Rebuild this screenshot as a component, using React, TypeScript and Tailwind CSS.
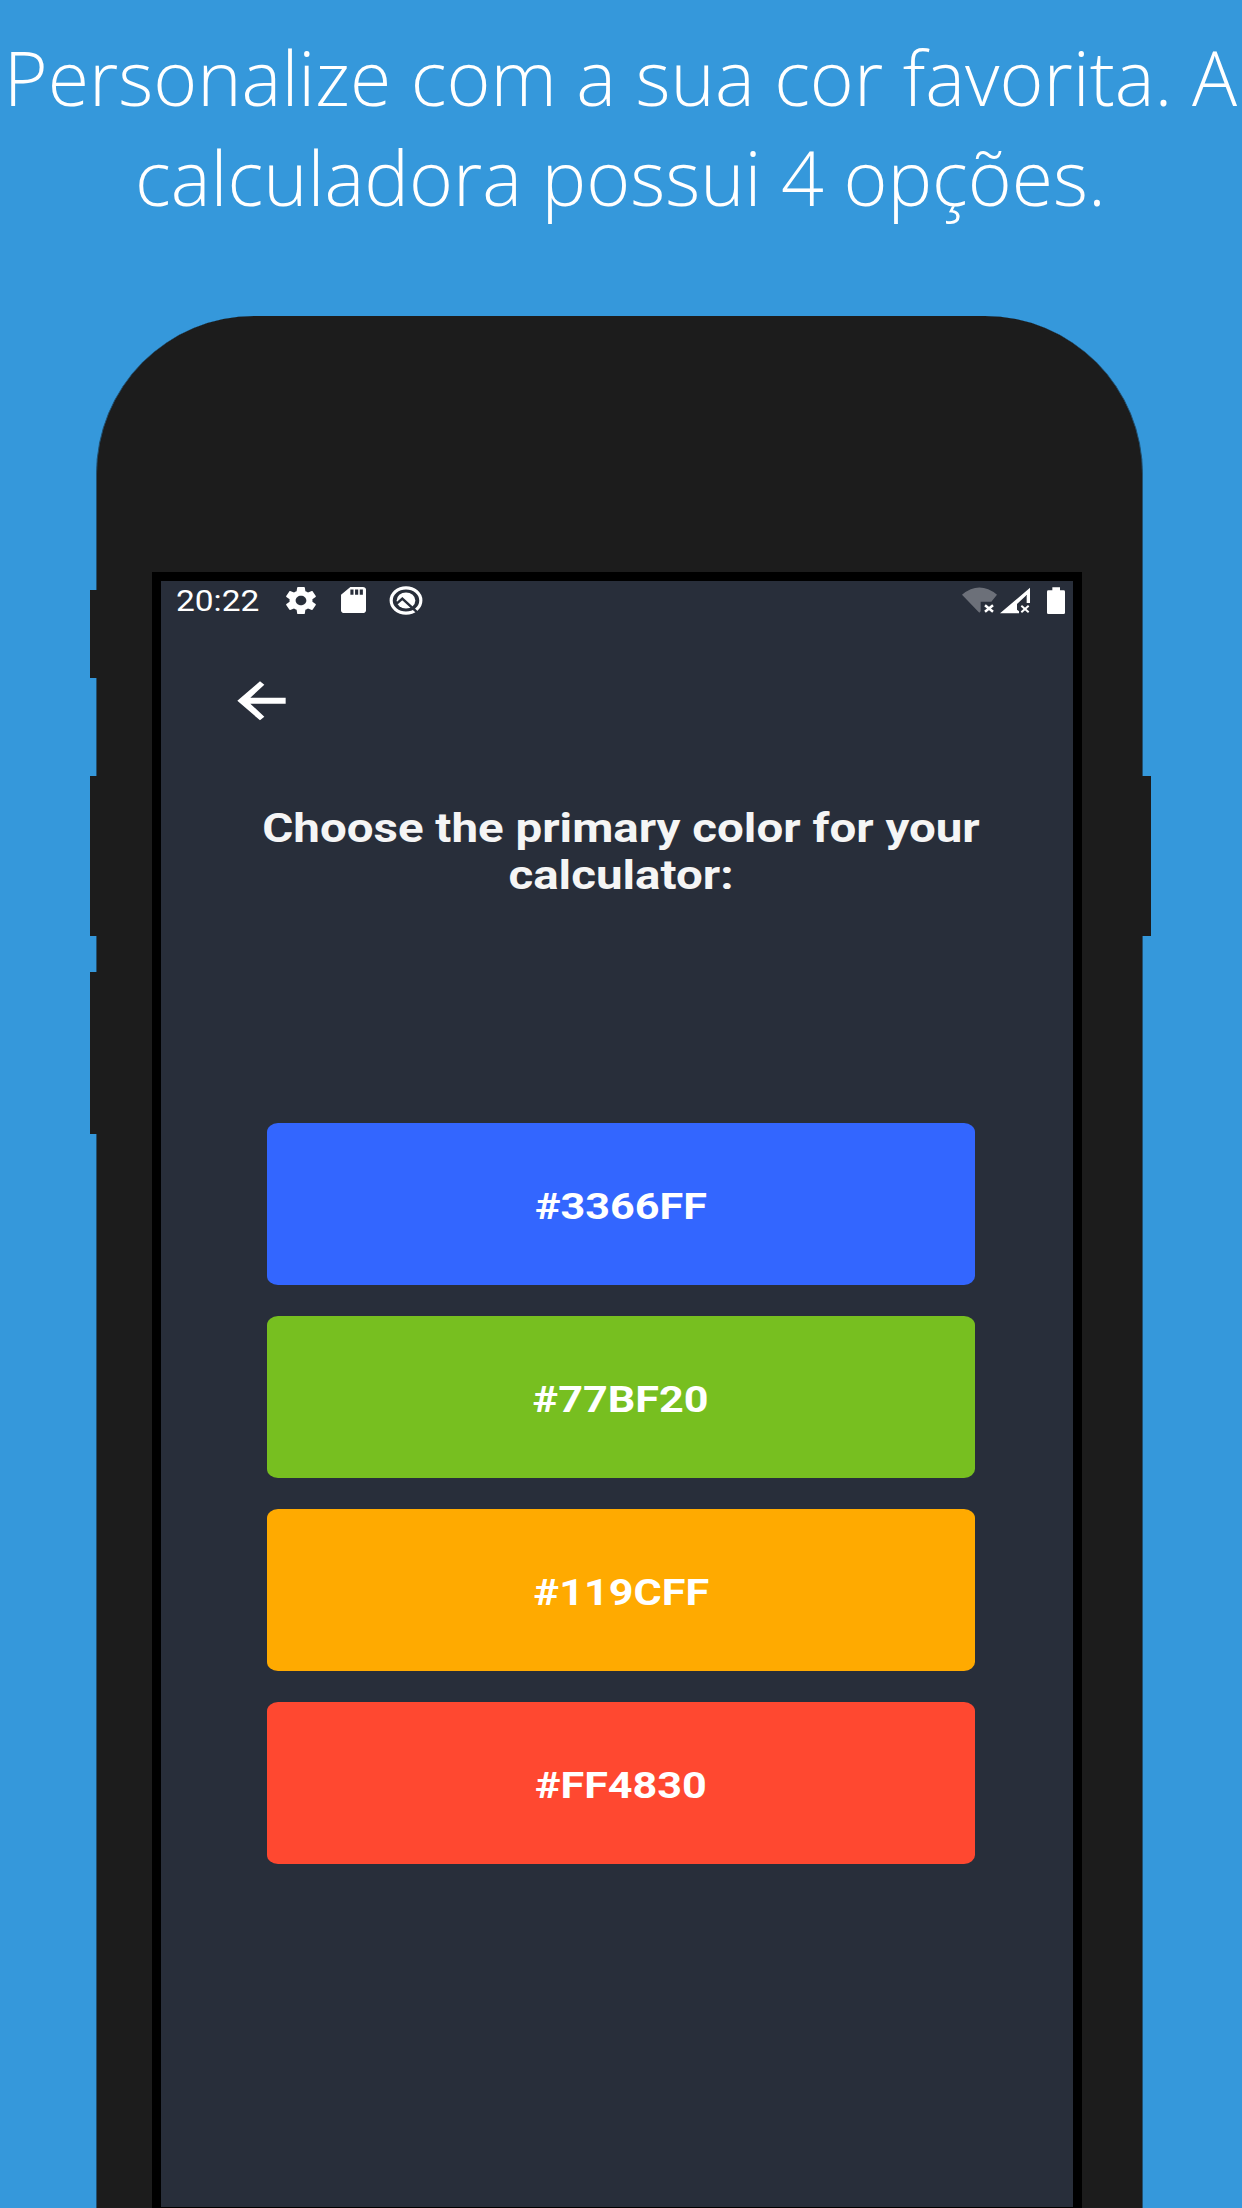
const swatches = [
  { label: "#3366FF", color: "bg-[#3366ff]" },
  { label: "#77BF20", color: "bg-[#77bf20]" },
  { label: "#119CFF", color: "bg-[#ffaa00]" },
  { label: "#FF4830", color: "bg-[#ff4830]" },
];

function GearIcon() {
  return (
    <svg className="ml-[26px] h-[27px] w-[30px]" viewBox="2.2 2 19.6 20" preserveAspectRatio="none" fill="white">
      <path d="M19.43 12.98c.04-.32.07-.64.07-.98s-.03-.66-.07-.98l2.11-1.65c.19-.15.24-.42.12-.64l-2-3.46c-.12-.22-.39-.3-.61-.22l-2.49 1c-.52-.4-1.08-.73-1.69-.98l-.38-2.65C14.46 2.18 14.25 2 14 2h-4c-.25 0-.46.18-.49.42l-.38 2.65c-.61.25-1.17.59-1.69.98l-2.49-1c-.23-.09-.49 0-.61.22l-2 3.46c-.13.22-.07.49.12.64l2.11 1.65c-.04.32-.07.65-.07.98s.03.66.07.98l-2.11 1.65c-.19.15-.24.42-.12.64l2 3.46c.12.22.39.3.61.22l2.49-1c.52.4 1.08.73 1.69.98l.38 2.65c.03.24.24.42.49.42h4c.25 0 .46-.18.49-.42l.38-2.65c.61-.25 1.17-.59 1.69-.98l2.49 1c.23.09.49 0 .61-.22l2-3.46c.12-.22.07-.49-.12-.64l-2.11-1.65zM12 15.5c-1.93 0-3.5-1.57-3.5-3.5s1.57-3.5 3.5-3.5 3.5 1.57 3.5 3.5-1.57 3.5-3.5 3.5z" />
    </svg>
  );
}

function SdCardIcon() {
  return (
    <svg className="ml-[25px] h-[26px] w-[25px]" viewBox="4 2 16 20" preserveAspectRatio="none" fill="white">
      <path d="M18 2h-8L4.02 8 4 20c0 1.1.9 2 2 2h12c1.1 0 2-.9 2-2V4c0-1.1-.9-2-2-2zm-6 6h-2V4h2v4zm3 0h-2V4h2v4zm3 0h-2V4h2v4z" />
    </svg>
  );
}

function DebugIcon() {
  return (
    <svg className="ml-[23px] h-[29px] w-[34px] -mt-px" viewBox="0 0 102 87" fill="none">
      <ellipse cx="51" cy="43.5" rx="44.5" ry="38" stroke="white" strokeWidth="9.5" />
      <ellipse cx="51" cy="43.5" rx="28" ry="24" fill="white" />
      <path d="M23 53 L40 38 L88 82" stroke="#282e3a" strokeWidth="7.5" />
    </svg>
  );
}

function WifiIcon() {
  return (
    <svg className="h-[27px] w-[35px]" viewBox="67 50 105 81" fill="none">
      <path d="M67 73 Q119 30 172 73 L155 94 H123 V123 L119 127 Z" fill="#6c7079" />
      <path d="M136 104.5 L160 124.5 M160 104.5 L136 124.5" stroke="white" strokeWidth="7.5" />
    </svg>
  );
}

function SignalIcon() {
  return (
    <svg className="ml-[3px] h-[27px] w-[30px]" viewBox="180 50 90 81" fill="none">
      <path d="M180 129 L270 52 V98 H260 V74 L231 101 V118 L237 123 V129 Z" fill="white" />
      <path d="M244 106.5 L266 125.5 M266 106.5 L244 125.5" stroke="white" strokeWidth="6" />
    </svg>
  );
}

function BatteryIcon() {
  return (
    <svg className="ml-[17px] h-[27px] w-[18px]" viewBox="0 0 54 81" fill="white">
      <path d="M16 1 H39 V10 H50 Q54 10 54 14 V77 Q54 81 50 81 H4 Q0 81 0 77 V14 Q0 10 4 10 H16 Z" />
    </svg>
  );
}

function BackArrow() {
  return (
    <svg className="h-10 w-[49px]" viewBox="51 63 147 120" fill="white">
      <path d="M52 122 L120 64 L133 74 L91 113 H197 V131 H91 L133 170 L120 181 Z" />
    </svg>
  );
}

function StatusBar() {
  return (
    <div className="flex h-[34px] items-start pt-[6px] pr-[8px] pl-[15px]">
      <span className="w-[84px] origin-left scale-x-[1.17] pt-[1px] text-[28.6px] leading-[26px] whitespace-nowrap">20:22</span>
      <GearIcon />
      <SdCardIcon />
      <DebugIcon />
      <div className="ml-auto flex">
        <WifiIcon />
        <SignalIcon />
        <BatteryIcon />
      </div>
    </div>
  );
}

function Screen() {
  return (
    <div className="mt-[256px] ml-[55px] h-[1636px] w-[930px] border-x-[9px] border-t-[9px] border-b border-black bg-[#282e3a] font-['Roboto',sans-serif] text-white">
      <StatusBar />
      <div className="mt-[66px] ml-[76px]">
        <BackArrow />
      </div>
      <div className="ml-[8px] flex flex-col items-center">
        <h2 className="mt-[84px] w-[640px] scale-x-[1.18] text-center text-[40.25px] leading-[47px] font-bold text-[#f5f5f5]">
          Choose the primary color for your
          <br />
          calculator:
        </h2>
        <div className="mt-[223.6px] flex w-[708px] flex-col gap-[31px]">
          {swatches.map((s) => (
            <button
              key={s.label}
              className={`flex h-[162.1px] items-center justify-center rounded-[11px/9px] pt-[6px] ${s.color}`}
            >
              <span className="scale-x-[1.18] text-[36.6px] leading-[44px] font-bold">{s.label}</span>
            </button>
          ))}
        </div>
      </div>
    </div>
  );
}

export default function App() {
  return (
    <main className="h-[2208px] w-[1242px] overflow-hidden bg-[#3598db]">
      <h1 className="-ml-px pt-[27px] text-center font-['Open_Sans',sans-serif] text-[75.1px] leading-[100px] font-light whitespace-nowrap text-white">
        Personalize com a sua cor favorita. A
        <br />
        calculadora possui 4 opções.
      </h1>
      <div className="mt-[89px] ml-[90px] flex h-[1892px]">
        <div className="z-10 -mr-px flex w-[7px] flex-col">
          <div className="mt-[274px] h-[88px] bg-[#1c1c1c]" />
          <div className="mt-[98px] h-[160px] bg-[#1c1c1c]" />
          <div className="mt-[36px] h-[162px] bg-[#1c1c1c]" />
        </div>
        <div className="w-[1047px] overflow-hidden rounded-t-[158px] border-x border-[#225070] bg-[#1c1c1c]">
          <Screen />
        </div>
        <div className="z-10 mt-[460px] -ml-px h-[160px] w-[9px] bg-[#1c1c1c]" />
      </div>
    </main>
  );
}
